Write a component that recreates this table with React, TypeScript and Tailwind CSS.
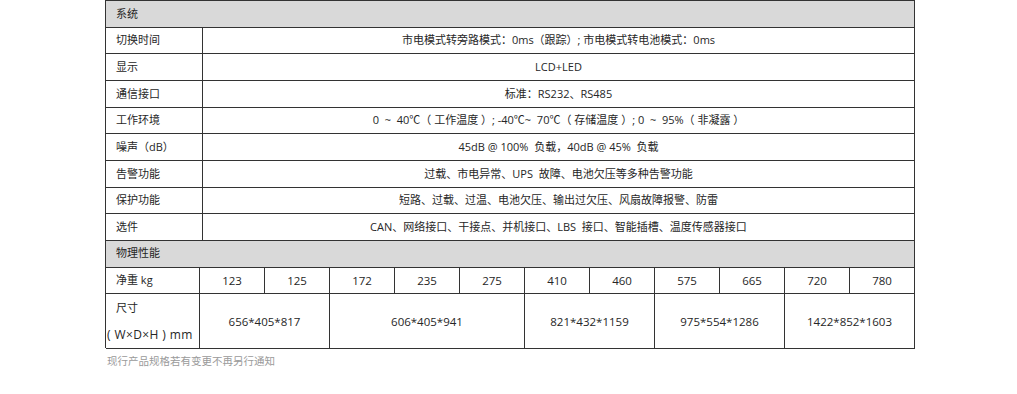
import React from "react";

const sysRows: [string, string][] = [
  ["切换时间", "市电模式转旁路模式：0ms（跟踪）; 市电模式转电池模式：0ms"],
  ["显示", "LCD+LED"],
  ["通信接口", "标准：RS232、RS485"],
  ["工作环境", "0  ~  40℃（ 工作温度 ）; -40℃~  70℃（ 存储温度 ）; 0  ~  95%（ 非凝露 ）"],
  ["噪声（dB）", "45dB @ 100%  负载，40dB @ 45%  负载"],
  ["告警功能", "过载、市电异常、UPS  故障、电池欠压等多种告警功能"],
  ["保护功能", "短路、过载、过温、电池欠压、输出过欠压、风扇故障报警、防雷"],
  ["选件", "CAN、网络接口、干接点、并机接口、LBS  接口、智能插槽、温度传感器接口"],
];

const weights = ["123", "125", "172", "235", "275", "410", "460", "575", "665", "720", "780"];

const sizes: { v: string; span: string }[] = [
  { v: "656*405*817", span: "col-span-2" },
  { v: "606*405*941", span: "col-span-3" },
  { v: "821*432*1159", span: "col-span-2" },
  { v: "975*554*1286", span: "col-span-2" },
  { v: "1422*852*1603", span: "col-span-2" },
];

export default function App() {
  return (
    <div className="min-h-screen bg-white font-['Open_Sans','Noto_Sans_CJK_SC',sans-serif] text-[11px] text-[#262626]">
      <div className="ml-[105px] w-[810px] border-l border-t border-[#333]">
        {/* 系统 */}
        <div className="h-[26.67px] bg-[#d9d9d9] border-b border-r border-[#333] pl-[10px] flex items-center">
          系统
        </div>
        {sysRows.map(([label, value]) => (
          <div key={label} className="grid grid-cols-[97px_1fr] h-[26.67px]">
            <div className="border-r border-b border-[#333] pl-[10px] flex items-center">{label}</div>
            <div className="border-r border-b border-[#333] flex items-center justify-center whitespace-pre">
              {value}
            </div>
          </div>
        ))}

        {/* 物理性能 */}
        <div className="h-[26.67px] bg-[#d9d9d9] border-b border-r border-[#333] pl-[10px] flex items-center">
          物理性能
        </div>
        <div className="grid grid-cols-[94px_repeat(11,65px)] h-[26.67px] text-[11.5px]">
          <div className="border-r border-b border-[#333] pl-[10px] flex items-center text-[11px]">净重 kg</div>
          {weights.map((w) => (
            <div key={w} className="border-r border-b border-[#333] flex items-center justify-center">
              {w}
            </div>
          ))}
        </div>
        <div className="grid grid-cols-[94px_repeat(11,65px)] h-[53.33px] text-[11.5px]">
          <div className="border-r border-b border-[#333] flex flex-col justify-center leading-[27px] text-[11px]">
            <div className="pl-[10px]">尺寸</div>
            <div className="pl-[1px] whitespace-pre text-[12px] tracking-[0.4px]">( W×D×H ) mm</div>
          </div>
          {sizes.map((s) => (
            <div key={s.v} className={`${s.span} border-r border-b border-[#333] flex items-center justify-center`}>
              {s.v}
            </div>
          ))}
        </div>
      </div>
      <p className="ml-[107px] mt-[6px] text-[10.5px] text-[#9a9a9a]">现行产品规格若有变更不再另行通知</p>
    </div>
  );
}
